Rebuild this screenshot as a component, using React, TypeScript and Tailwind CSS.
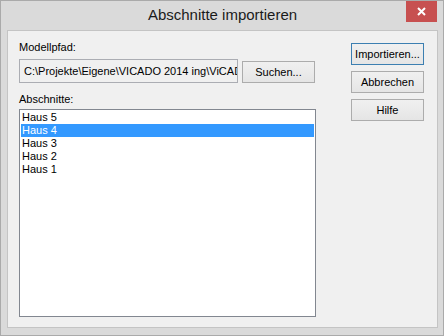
import React from "react";

const items = ["Haus 5", "Haus 4", "Haus 3", "Haus 2", "Haus 1"];

const Btn = ({ label, focused }: { label: string; focused?: boolean }) => (
  <button
    className={`h-[22px] w-[73px] border bg-gradient-to-b from-[#f0f0f0] to-[#e5e5e5] text-[11px] leading-[13px] text-black ${
      focused ? "border-[#3c7fb1] from-[#eaf3fc] to-[#dcecfc]" : "border-[#acacac]"
    }`}
  >
    {label}
  </button>
);

const App = () => {
  const selected = 1;
  return (
    <div
      className="relative flex h-[336px] w-[444px] flex-col border border-[#aaaaaa] bg-[#dadada] pl-[6px] pr-[5px] pb-[7px]"
      style={{ fontFamily: '"Liberation Sans", Arial, sans-serif' }}
    >
      {/* title bar */}
      <div className="flex h-[29px] shrink-0 items-center justify-center text-[15px] text-[#1a1a1a]">
        Abschnitte importieren
      </div>
      <div className="absolute right-[6px] top-0 flex h-[21px] w-[31px] items-center justify-center bg-[#c75050]">
        <svg width="9" height="9" viewBox="0 0 9 9">
          <path d="M1 1 L8 8 M8 1 L1 8" stroke="#fff" strokeWidth="2" />
        </svg>
      </div>

      {/* client area */}
      <div className="flex flex-1 border border-[#c4c4c4] bg-[#f0f0f0] pl-[11px] pr-[13px] text-[11px] leading-[13px] text-black">
        <div className="flex w-[297px] flex-col pt-[10px]">
          <div>Modellpfad:</div>
          <div className="mt-[5px] flex items-end gap-[4px]">
            <div className="flex h-[24px] w-[219px] items-center overflow-hidden whitespace-nowrap border border-[#abadb3] bg-[#f0f0f0] pl-[4px]">
              C:\Projekte\Eigene\VICADO 2014 ing\ViCAD
            </div>
            <Btn label="Suchen..." />
          </div>
          <div className="mt-[10px]">Abschnitte:</div>
          <div className="mt-[3px] h-[208px] border border-[#828790] bg-white p-px">
            {items.map((it, i) => (
              <div
                key={it}
                className={`h-[13px] pl-px leading-[13px] ${
                  i === selected ? "bg-[#3399ff] text-white" : ""
                }`}
              >
                {it}
              </div>
            ))}
          </div>
        </div>
        <div className="ml-auto flex flex-col gap-[6px] pt-[12px]">
          <Btn label="Importieren..." focused />
          <Btn label="Abbrechen" />
          <Btn label="Hilfe" />
        </div>
      </div>
    </div>
  );
};

export default App;
